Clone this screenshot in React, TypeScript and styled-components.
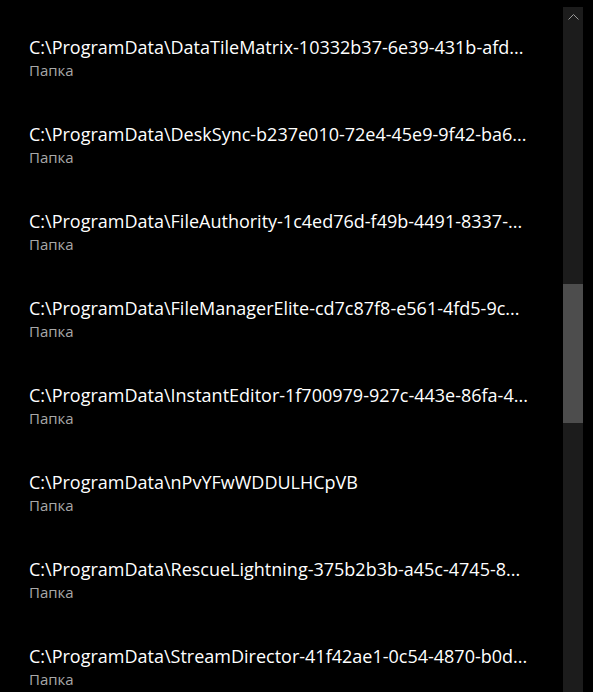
import React from "react";
import styled, { createGlobalStyle } from "styled-components";

const GlobalStyle = createGlobalStyle`
  html, body {
    margin: 0;
    padding: 0;
    background: #000;
  }
  body {
    font-family: "Open Sans", "Noto Sans", sans-serif;
  }
`;

const Page = styled.div`
  display: flex;
  width: 593px;
  height: 692px;
  background: #000;
  overflow: hidden;
`;

const List = styled.div`
  flex: 1;
  display: flex;
  flex-direction: column;
  padding: 14px 0 0 29px;
  min-width: 0;
`;

const Row = styled.div`
  height: 87px;
  flex-shrink: 0;
  display: flex;
  flex-direction: column;
  justify-content: center;
  gap: 1px;
`;

const Path = styled.div`
  color: #ffffff;
  font-size: 18px;
  line-height: 24px;
  white-space: nowrap;
  overflow: hidden;
  max-width: 510px;
`;

const Kind = styled.div`
  color: #a8a8a8;
  font-size: 15px;
  line-height: 20px;
`;

const ScrollTrack = styled.div`
  width: 20px;
  margin: 7px 10px 0 0;
  background: #1c1c1c;
  display: flex;
  flex-direction: column;
  align-items: center;
`;

const ArrowButton = styled.div`
  height: 20px;
  width: 20px;
  display: flex;
  align-items: center;
  justify-content: center;
`;

const Thumb = styled.div`
  width: 20px;
  height: 139px;
  margin-top: 257px;
  background: #4d4d4d;
`;

const items = [
  "C:\\ProgramData\\DataTileMatrix-10332b37-6e39-431b-afd...",
  "C:\\ProgramData\\DeskSync-b237e010-72e4-45e9-9f42-ba6...",
  "C:\\ProgramData\\FileAuthority-1c4ed76d-f49b-4491-8337-...",
  "C:\\ProgramData\\FileManagerElite-cd7c87f8-e561-4fd5-9c...",
  "C:\\ProgramData\\InstantEditor-1f700979-927c-443e-86fa-4...",
  "C:\\ProgramData\\nPvYFwWDDULHCpVB",
  "C:\\ProgramData\\RescueLightning-375b2b3b-a45c-4745-8...",
  "C:\\ProgramData\\StreamDirector-41f42ae1-0c54-4870-b0d...",
];

export default function App() {
  return (
    <>
      <GlobalStyle />
      <Page>
        <List>
          {items.map((p) => (
            <Row key={p}>
              <Path>{p}</Path>
              <Kind>Папка</Kind>
            </Row>
          ))}
        </List>
        <ScrollTrack>
          <ArrowButton>
            <svg width="11" height="6" viewBox="0 0 11 6">
              <polyline
                points="0.5,5.5 5.5,0.5 10.5,5.5"
                fill="none"
                stroke="#9a9a9a"
                strokeWidth="1"
              />
            </svg>
          </ArrowButton>
          <Thumb />
        </ScrollTrack>
      </Page>
    </>
  );
}
